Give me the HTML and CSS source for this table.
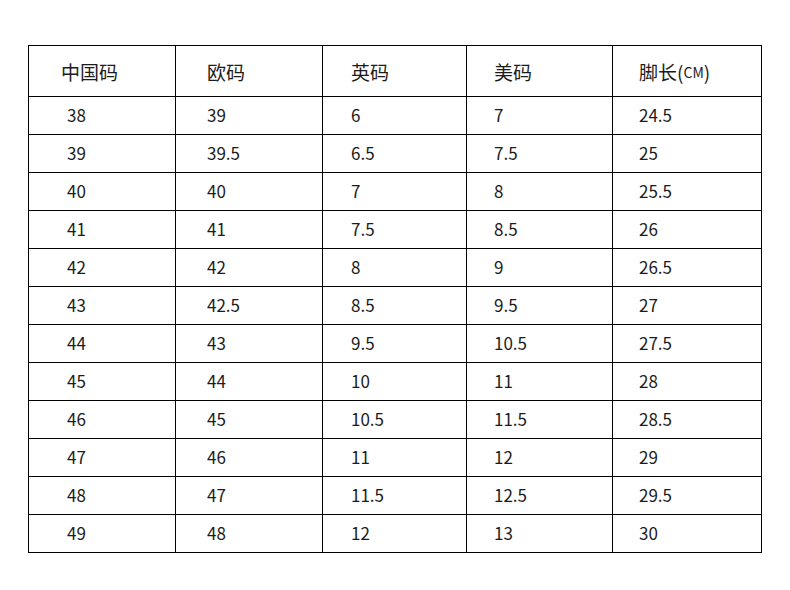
FILE: index.html
```html
<!DOCTYPE html>
<html lang="zh">
<head>
<meta charset="utf-8">
<title>尺码对照表</title>
<link rel="stylesheet" href="styles.css">
</head>
<body>
<div class="size-table">
  <div class="cell head">中国码</div>
  <div class="cell head">欧码</div>
  <div class="cell head">英码</div>
  <div class="cell head">美码</div>
  <div class="cell head">脚长<span class="paren">(</span><span class="unit">CM</span><span class="paren">)</span></div>

  <div class="cell">38</div><div class="cell">39</div><div class="cell">6</div><div class="cell">7</div><div class="cell">24.5</div>
  <div class="cell">39</div><div class="cell">39.5</div><div class="cell">6.5</div><div class="cell">7.5</div><div class="cell">25</div>
  <div class="cell">40</div><div class="cell">40</div><div class="cell">7</div><div class="cell">8</div><div class="cell">25.5</div>
  <div class="cell">41</div><div class="cell">41</div><div class="cell">7.5</div><div class="cell">8.5</div><div class="cell">26</div>
  <div class="cell">42</div><div class="cell">42</div><div class="cell">8</div><div class="cell">9</div><div class="cell">26.5</div>
  <div class="cell">43</div><div class="cell">42.5</div><div class="cell">8.5</div><div class="cell">9.5</div><div class="cell">27</div>
  <div class="cell">44</div><div class="cell">43</div><div class="cell">9.5</div><div class="cell">10.5</div><div class="cell">27.5</div>
  <div class="cell">45</div><div class="cell">44</div><div class="cell">10</div><div class="cell">11</div><div class="cell">28</div>
  <div class="cell">46</div><div class="cell">45</div><div class="cell">10.5</div><div class="cell">11.5</div><div class="cell">28.5</div>
  <div class="cell">47</div><div class="cell">46</div><div class="cell">11</div><div class="cell">12</div><div class="cell">29</div>
  <div class="cell">48</div><div class="cell">47</div><div class="cell">11.5</div><div class="cell">12.5</div><div class="cell">29.5</div>
  <div class="cell">49</div><div class="cell">48</div><div class="cell">12</div><div class="cell">13</div><div class="cell">30</div>
</div>
</body>
</html>
```

FILE: styles.css
```css
html, body {
  margin: 0;
  padding: 0;
  background: #ffffff;
}

body {
  font-family: "Noto Sans CJK SC", "Noto Sans", sans-serif;
  color: #1c1c1c;
}

.size-table {
  margin: 45px 0 0 28px;
  display: grid;
  grid-template-columns: 147px 147px 144px 146px 149px;
  grid-template-rows: 51px repeat(12, 38px);
  width: max-content;
  border-top: 1px solid #000;
  border-left: 1px solid #000;
}

.cell {
  box-sizing: border-box;
  border-right: 1px solid #000;
  border-bottom: 1px solid #000;
  display: flex;
  align-items: center;
  padding-left: 31px;
  padding-bottom: 3px;
  font-size: 17px;
  line-height: 1;
  white-space: nowrap;
}

/* per-column text indents */
.cell:nth-child(5n+1) { padding-left: 38px; }
.cell:nth-child(5n+2) { padding-left: 31px; }
.cell:nth-child(5n+3) { padding-left: 28px; }
.cell:nth-child(5n+4) { padding-left: 27px; }
.cell:nth-child(5n+5) { padding-left: 26px; }

.cell.head {
  font-size: 19px;
  padding-top: 1px;
  padding-bottom: 0;
}

.cell.head:nth-child(1) { padding-left: 32px; }

.unit {
  font-size: 14px;
}
```
